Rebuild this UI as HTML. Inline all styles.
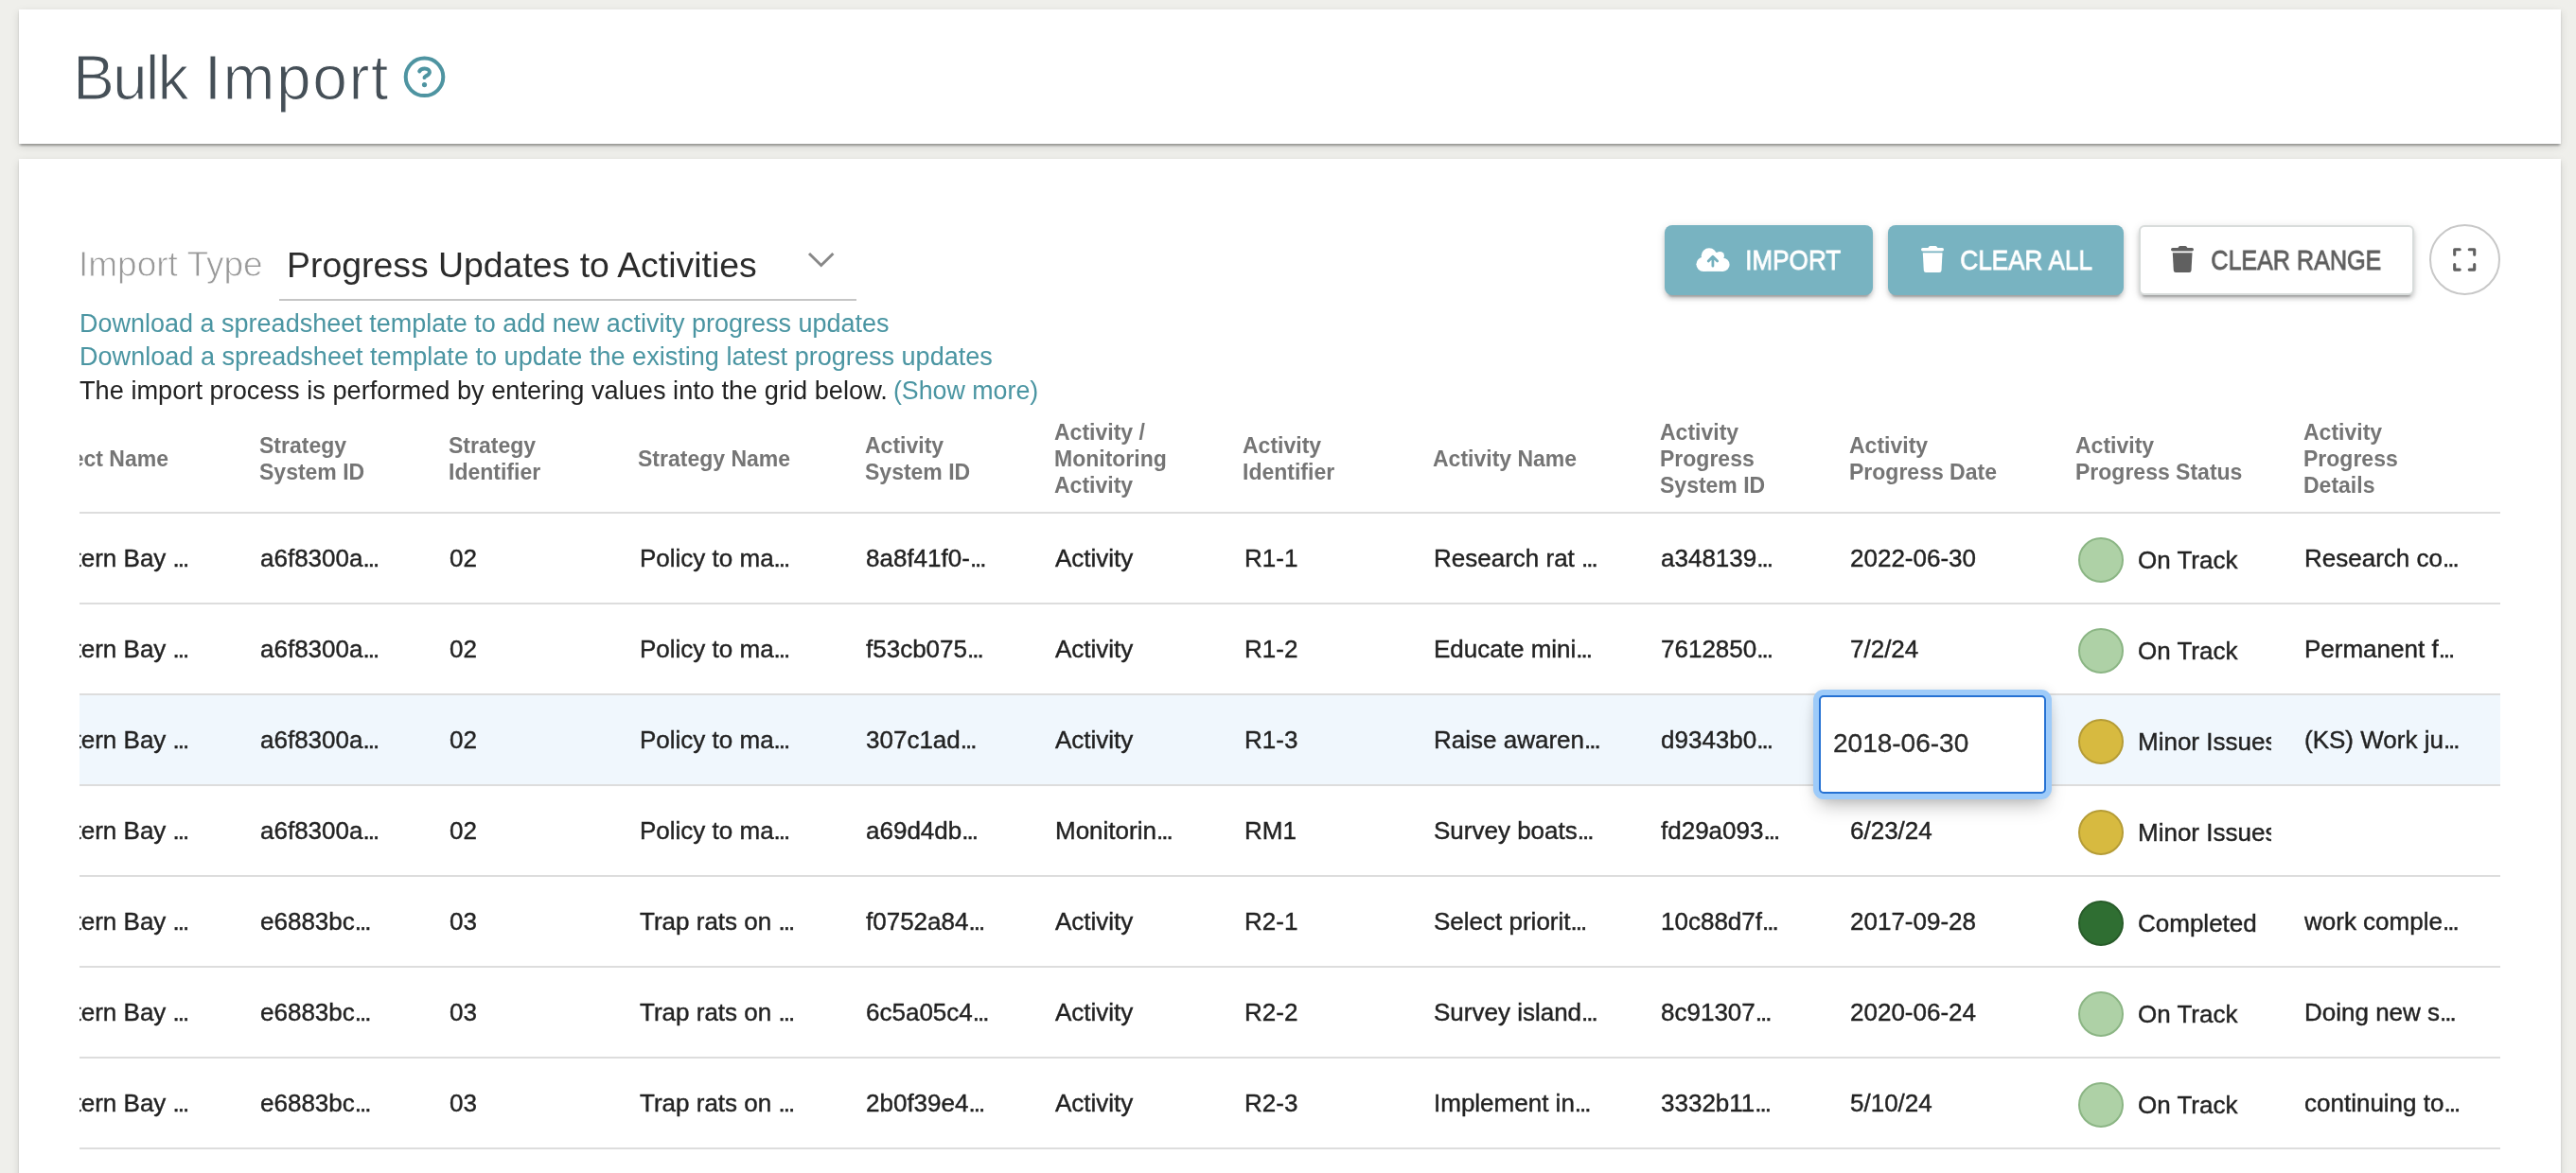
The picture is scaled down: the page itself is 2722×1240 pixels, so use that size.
<!DOCTYPE html><html><head><meta charset="utf-8"><style>
*{box-sizing:border-box}
html,body{margin:0;padding:0}
body{width:2722px;height:1240px;overflow:hidden;background:#efefeb;position:relative;font-family:"Liberation Sans", sans-serif}
.t{position:absolute;white-space:nowrap;will-change:transform}
.card{position:absolute;background:#fff;left:20px;width:2686px}
.btn{position:absolute;border-radius:8px}
</style></head><body><div class="card" style="top:10px;height:142px;box-shadow:0 4px 2px -2px rgba(0,0,0,.2),0 2px 2px 0 rgba(0,0,0,.14),0 3px 9px 0 rgba(0,0,0,.12)"></div>
<div class="card" style="top:168px;height:1100px;box-shadow:0 4px 2px -2px rgba(0,0,0,.2),0 2px 2px 0 rgba(0,0,0,.14),0 3px 9px 0 rgba(0,0,0,.12)"></div>
<div class="t" style="left:76.5px;top:49px;font-size:66px;line-height:66px;color:#454f57;font-weight:400;-webkit-text-stroke:1.2px #fff;paint-order:normal"><span style="letter-spacing:-2px">Bulk</span> <span style="letter-spacing:1.5px">Import</span></div>
<svg style="position:absolute;left:424px;top:57px" width="49" height="49" viewBox="-24.5 -24.3 49 49">
<circle cx="0" cy="0" r="19.8" fill="none" stroke="#4e94a1" stroke-width="4"/>
<path d="M-5.3 -5.9 C-4.4 -8 -2.4 -8.9 0.3 -8.9 C3.4 -8.9 5.4 -7.2 5.4 -5 C5.4 -2.6 3.2 -1.8 1.4 -0.8 C0.3 -0.2 -0.1 0.2 0 0.8" fill="none" stroke="#4e94a1" stroke-width="4" stroke-linecap="round" stroke-linejoin="round"/>
<circle cx="0" cy="8.3" r="2.6" fill="#4e94a1"/>
</svg>
<div class="t" style="left:83px;top:261px;font-size:37px;line-height:37px;color:#999;font-weight:400;-webkit-text-stroke:0.8px #fff">Import Type</div>
<div class="t" style="left:303px;top:262px;font-size:37.4px;line-height:37.4px;color:#2b2b2b;font-weight:400;">Progress Updates to Activities</div>
<div style="position:absolute;left:295px;top:316px;width:610px;height:2px;background:#c6c6c6"></div>
<svg style="position:absolute;left:850px;top:262px" width="36" height="24" viewBox="850 262 36 24"><path d="M855 268 L867.7 280.5 L880.4 268" fill="none" stroke="#888" stroke-width="3"/></svg>
<div class="t" style="left:84px;top:329px;font-size:27px;line-height:27px;color:#4a95a2;font-weight:400;">Download a spreadsheet template to add new activity progress updates</div>
<div class="t" style="left:84px;top:363px;font-size:27.08px;line-height:27.08px;color:#4a95a2;font-weight:400;">Download a spreadsheet template to update the existing latest progress updates</div>
<div class="t" style="left:84px;top:399px;font-size:27.2px;line-height:27.2px;color:#222;font-weight:400;">The import process is performed by entering values into the grid below. <span style="color:#4a95a2;font-size:26.8px;margin-left:-1.5px">(Show more)</span></div>
<div class="btn" style="left:1759px;top:238px;width:220px;height:74px;background:#78b3c1;box-shadow:0 6px 2px -4px rgba(0,0,0,.2),0 4px 4px 0 rgba(0,0,0,.14),0 2px 10px 0 rgba(0,0,0,.12)"></div>
<svg style="position:absolute;left:1785px;top:255px" width="50" height="40" viewBox="1785 255 50 40">
<g fill="#fff"><circle cx="1800" cy="279.3" r="7.6"/><circle cx="1806" cy="270.5" r="8.3"/><circle cx="1817.5" cy="270.4" r="4.5"/><circle cx="1820.5" cy="279.8" r="7.1"/><rect x="1800" y="271" width="20.5" height="15.9"/><rect x="1808" y="266.8" width="8.5" height="10"/></g>
<path d="M1805.2 276 L1809.9 271.2 L1814.7 276 M1809.9 271.5 L1809.9 281.2" fill="none" stroke="#74b0be" stroke-width="2.8" stroke-linecap="round" stroke-linejoin="round"/>
</svg>
<div class="t" style="left:1844px;top:260px;font-size:30px;line-height:30px;color:#fff;font-weight:400;-webkit-text-stroke:0.8px #fff;transform:scaleX(0.869);transform-origin:2px 0">IMPORT</div>
<div class="btn" style="left:1995px;top:238px;width:249px;height:74px;background:#78b3c1;box-shadow:0 6px 2px -4px rgba(0,0,0,.2),0 4px 4px 0 rgba(0,0,0,.14),0 2px 10px 0 rgba(0,0,0,.12)"></div>
<svg style="position:absolute;left:2027.5px;top:258.3px" width="29" height="33" viewBox="2027.5 258.3 29 33">
<g fill="#fff"><path d="M2036.7 262.5 L2037.9 260.7 Q2038.3 260.3 2039.0 260.3 L2044.8 260.3 Q2045.5 260.3 2045.9 260.7 L2047.1 262.5 Z"/>
<rect x="2029.5" y="262.3" width="24" height="3.5" rx="1.75"/>
<path d="M2031.3 267.5 L2052.0 267.5 L2051.0 286.3 Q2050.8 288.3 2048.8 288.3 L2034.5 288.3 Q2032.5 288.3 2032.3 286.3 Z"/></g></svg>
<div class="t" style="left:2070.5px;top:260px;font-size:30px;line-height:30px;color:#fff;font-weight:400;-webkit-text-stroke:0.8px #fff;transform:scaleX(0.872);transform-origin:2px 0">CLEAR ALL</div>
<div class="btn" style="left:2260px;top:238px;width:291px;height:74px;background:#fff;border:2px solid #d8dcdb;border-radius:6px;box-shadow:0 6px 2px -4px rgba(0,0,0,.2),0 4px 4px 0 rgba(0,0,0,.14),0 2px 10px 0 rgba(0,0,0,.12)"></div>
<svg style="position:absolute;left:2292.2px;top:258.3px" width="29" height="33" viewBox="2292.2 258.3 29 33">
<g fill="#606060"><path d="M2301.3999999999996 262.5 L2302.6 260.7 Q2303.0 260.3 2303.7 260.3 L2309.5 260.3 Q2310.2 260.3 2310.6 260.7 L2311.7999999999997 262.5 Z"/>
<rect x="2294.2" y="262.3" width="24" height="3.5" rx="1.75"/>
<path d="M2296.0 267.5 L2316.7 267.5 L2315.7 286.3 Q2315.5 288.3 2313.5 288.3 L2299.2 288.3 Q2297.2 288.3 2297.0 286.3 Z"/></g></svg>
<div class="t" style="left:2335.5px;top:260px;font-size:30px;line-height:30px;color:#5f5f5f;font-weight:400;-webkit-text-stroke:0.8px #5f5f5f;transform:scaleX(0.837);transform-origin:2px 0">CLEAR RANGE</div>
<div style="position:absolute;left:2567px;top:237px;width:75px;height:75px;border-radius:50%;border:2px solid #c8c8c8;background:#fff"></div>
<svg style="position:absolute;left:2584px;top:254px" width="40" height="40" viewBox="2584 254 40 40">
<path d="M2593.7 269.2 V263.7 H2599.2 M2609.2 263.7 H2614.7 V269.2 M2614.7 279.6 V285.1 H2609.2 M2599.2 285.1 H2593.7 V279.6" fill="none" stroke="#606060" stroke-width="3.1" stroke-linecap="round" stroke-linejoin="round"/>
</svg>
<div id="tbl" style="position:absolute;left:84px;top:420px;width:2558px;height:820px;overflow:hidden">
<div class="t" style="left:-56.0px;top:53.5px;font-size:23px;line-height:23px;color:#757575;font-weight:700;"><span style="display:inline-block;width:150px;text-align:right">Project Name</span></div>
<div class="t" style="left:189.7px;top:39.80000000000001px;font-size:23px;line-height:23px;color:#757575;font-weight:700;">Strategy</div>
<div class="t" style="left:189.7px;top:67.69999999999999px;font-size:23px;line-height:23px;color:#757575;font-weight:700;">System ID</div>
<div class="t" style="left:389.6px;top:39.80000000000001px;font-size:23px;line-height:23px;color:#757575;font-weight:700;">Strategy</div>
<div class="t" style="left:389.6px;top:67.69999999999999px;font-size:23px;line-height:23px;color:#757575;font-weight:700;">Identifier</div>
<div class="t" style="left:590.0px;top:53.5px;font-size:23px;line-height:23px;color:#757575;font-weight:700;">Strategy Name</div>
<div class="t" style="left:829.5px;top:39.80000000000001px;font-size:23px;line-height:23px;color:#757575;font-weight:700;">Activity</div>
<div class="t" style="left:829.5px;top:67.69999999999999px;font-size:23px;line-height:23px;color:#757575;font-weight:700;">System ID</div>
<div class="t" style="left:1029.5px;top:25.80000000000001px;font-size:23px;line-height:23px;color:#757575;font-weight:700;">Activity /</div>
<div class="t" style="left:1029.5px;top:53.80000000000001px;font-size:23px;line-height:23px;color:#757575;font-weight:700;">Monitoring</div>
<div class="t" style="left:1029.5px;top:81.70000000000005px;font-size:23px;line-height:23px;color:#757575;font-weight:700;">Activity</div>
<div class="t" style="left:1229.3px;top:39.80000000000001px;font-size:23px;line-height:23px;color:#757575;font-weight:700;">Activity</div>
<div class="t" style="left:1229.3px;top:67.69999999999999px;font-size:23px;line-height:23px;color:#757575;font-weight:700;">Identifier</div>
<div class="t" style="left:1429.5px;top:53.5px;font-size:23px;line-height:23px;color:#757575;font-weight:700;">Activity Name</div>
<div class="t" style="left:1669.6px;top:25.80000000000001px;font-size:23px;line-height:23px;color:#757575;font-weight:700;">Activity</div>
<div class="t" style="left:1669.6px;top:53.80000000000001px;font-size:23px;line-height:23px;color:#757575;font-weight:700;">Progress</div>
<div class="t" style="left:1669.6px;top:81.70000000000005px;font-size:23px;line-height:23px;color:#757575;font-weight:700;">System ID</div>
<div class="t" style="left:1869.7px;top:39.80000000000001px;font-size:23px;line-height:23px;color:#757575;font-weight:700;">Activity</div>
<div class="t" style="left:1869.7px;top:67.69999999999999px;font-size:23px;line-height:23px;color:#757575;font-weight:700;">Progress Date</div>
<div class="t" style="left:2109.3px;top:39.80000000000001px;font-size:23px;line-height:23px;color:#757575;font-weight:700;">Activity</div>
<div class="t" style="left:2109.3px;top:67.69999999999999px;font-size:23px;line-height:23px;color:#757575;font-weight:700;">Progress Status</div>
<div class="t" style="left:2349.7px;top:25.80000000000001px;font-size:23px;line-height:23px;color:#757575;font-weight:700;">Activity</div>
<div class="t" style="left:2349.7px;top:53.80000000000001px;font-size:23px;line-height:23px;color:#757575;font-weight:700;">Progress</div>
<div class="t" style="left:2349.7px;top:81.70000000000005px;font-size:23px;line-height:23px;color:#757575;font-weight:700;">Details</div>
<div style="position:absolute;left:0;top:121px;width:2558px;height:2px;background:#dddddd"></div>
<div style="position:absolute;left:0;top:217px;width:2558px;height:2px;background:#dddddd"></div>
<div class="t" style="left:-57px;top:157px;width:171px;text-align:right;font-size:26px;line-height:26px;color:#222;-webkit-text-stroke:0.4px #222">Western Bay <span style="letter-spacing:-2px;margin-right:2px">...</span></div>
<div class="t" style="left:191.2px;top:157px;font-size:26px;line-height:26px;color:#222;font-weight:400;-webkit-text-stroke:0.4px #222">a6f8300a<span style="letter-spacing:-2px">...</span></div>
<div class="t" style="left:391.1px;top:157px;font-size:26px;line-height:26px;color:#222;font-weight:400;-webkit-text-stroke:0.4px #222">02</div>
<div class="t" style="left:591.5px;top:157px;font-size:26px;line-height:26px;color:#222;font-weight:400;-webkit-text-stroke:0.4px #222">Policy to ma<span style="letter-spacing:-2px">...</span></div>
<div class="t" style="left:831.0px;top:157px;font-size:26px;line-height:26px;color:#222;font-weight:400;-webkit-text-stroke:0.4px #222">8a8f41f0-<span style="letter-spacing:-2px">...</span></div>
<div class="t" style="left:1031.0px;top:157px;font-size:26px;line-height:26px;color:#222;font-weight:400;-webkit-text-stroke:0.4px #222">Activity</div>
<div class="t" style="left:1230.8px;top:157px;font-size:26px;line-height:26px;color:#222;font-weight:400;-webkit-text-stroke:0.4px #222">R1-1</div>
<div class="t" style="left:1431.0px;top:157px;font-size:26px;line-height:26px;color:#222;font-weight:400;-webkit-text-stroke:0.4px #222">Research rat <span style="letter-spacing:-2px">...</span></div>
<div class="t" style="left:1671.1px;top:157px;font-size:26px;line-height:26px;color:#222;font-weight:400;-webkit-text-stroke:0.4px #222">a348139<span style="letter-spacing:-2px">...</span></div>
<div class="t" style="left:1871.2px;top:157px;font-size:26px;line-height:26px;color:#222;font-weight:400;-webkit-text-stroke:0.4px #222">2022-06-30</div>
<div style="position:absolute;left:2112px;top:148px;width:48px;height:48px;border-radius:50%;background:#aed1a6;border:2px solid #8bb584"></div>
<div style="position:absolute;left:2175px;top:123px;width:141px;height:94px;overflow:hidden">
<div class="t" style="left:0px;top:36px;font-size:26px;line-height:26px;color:#222;-webkit-text-stroke:0.4px #222">On Track</div></div>
<div class="t" style="left:2351.2px;top:157px;font-size:26px;line-height:26px;color:#222;font-weight:400;-webkit-text-stroke:0.4px #222">Research co<span style="letter-spacing:-2px">...</span></div>
<div style="position:absolute;left:0;top:313px;width:2558px;height:2px;background:#dddddd"></div>
<div class="t" style="left:-57px;top:253px;width:171px;text-align:right;font-size:26px;line-height:26px;color:#222;-webkit-text-stroke:0.4px #222">Western Bay <span style="letter-spacing:-2px;margin-right:2px">...</span></div>
<div class="t" style="left:191.2px;top:253px;font-size:26px;line-height:26px;color:#222;font-weight:400;-webkit-text-stroke:0.4px #222">a6f8300a<span style="letter-spacing:-2px">...</span></div>
<div class="t" style="left:391.1px;top:253px;font-size:26px;line-height:26px;color:#222;font-weight:400;-webkit-text-stroke:0.4px #222">02</div>
<div class="t" style="left:591.5px;top:253px;font-size:26px;line-height:26px;color:#222;font-weight:400;-webkit-text-stroke:0.4px #222">Policy to ma<span style="letter-spacing:-2px">...</span></div>
<div class="t" style="left:831.0px;top:253px;font-size:26px;line-height:26px;color:#222;font-weight:400;-webkit-text-stroke:0.4px #222">f53cb075<span style="letter-spacing:-2px">...</span></div>
<div class="t" style="left:1031.0px;top:253px;font-size:26px;line-height:26px;color:#222;font-weight:400;-webkit-text-stroke:0.4px #222">Activity</div>
<div class="t" style="left:1230.8px;top:253px;font-size:26px;line-height:26px;color:#222;font-weight:400;-webkit-text-stroke:0.4px #222">R1-2</div>
<div class="t" style="left:1431.0px;top:253px;font-size:26px;line-height:26px;color:#222;font-weight:400;-webkit-text-stroke:0.4px #222">Educate mini<span style="letter-spacing:-2px">...</span></div>
<div class="t" style="left:1671.1px;top:253px;font-size:26px;line-height:26px;color:#222;font-weight:400;-webkit-text-stroke:0.4px #222">7612850<span style="letter-spacing:-2px">...</span></div>
<div class="t" style="left:1871.2px;top:253px;font-size:26px;line-height:26px;color:#222;font-weight:400;-webkit-text-stroke:0.4px #222">7/2/24</div>
<div style="position:absolute;left:2112px;top:244px;width:48px;height:48px;border-radius:50%;background:#aed1a6;border:2px solid #8bb584"></div>
<div style="position:absolute;left:2175px;top:219px;width:141px;height:94px;overflow:hidden">
<div class="t" style="left:0px;top:36px;font-size:26px;line-height:26px;color:#222;-webkit-text-stroke:0.4px #222">On Track</div></div>
<div class="t" style="left:2351.2px;top:253px;font-size:26px;line-height:26px;color:#222;font-weight:400;-webkit-text-stroke:0.4px #222">Permanent f<span style="letter-spacing:-2px">...</span></div>
<div style="position:absolute;left:0;top:315px;width:2558px;height:94px;background:#f0f7fd"></div>
<div style="position:absolute;left:0;top:409px;width:2558px;height:2px;background:#dddddd"></div>
<div class="t" style="left:-57px;top:349px;width:171px;text-align:right;font-size:26px;line-height:26px;color:#222;-webkit-text-stroke:0.4px #222">Western Bay <span style="letter-spacing:-2px;margin-right:2px">...</span></div>
<div class="t" style="left:191.2px;top:349px;font-size:26px;line-height:26px;color:#222;font-weight:400;-webkit-text-stroke:0.4px #222">a6f8300a<span style="letter-spacing:-2px">...</span></div>
<div class="t" style="left:391.1px;top:349px;font-size:26px;line-height:26px;color:#222;font-weight:400;-webkit-text-stroke:0.4px #222">02</div>
<div class="t" style="left:591.5px;top:349px;font-size:26px;line-height:26px;color:#222;font-weight:400;-webkit-text-stroke:0.4px #222">Policy to ma<span style="letter-spacing:-2px">...</span></div>
<div class="t" style="left:831.0px;top:349px;font-size:26px;line-height:26px;color:#222;font-weight:400;-webkit-text-stroke:0.4px #222">307c1ad<span style="letter-spacing:-2px">...</span></div>
<div class="t" style="left:1031.0px;top:349px;font-size:26px;line-height:26px;color:#222;font-weight:400;-webkit-text-stroke:0.4px #222">Activity</div>
<div class="t" style="left:1230.8px;top:349px;font-size:26px;line-height:26px;color:#222;font-weight:400;-webkit-text-stroke:0.4px #222">R1-3</div>
<div class="t" style="left:1431.0px;top:349px;font-size:26px;line-height:26px;color:#222;font-weight:400;-webkit-text-stroke:0.4px #222">Raise awaren<span style="letter-spacing:-2px">...</span></div>
<div class="t" style="left:1671.1px;top:349px;font-size:26px;line-height:26px;color:#222;font-weight:400;-webkit-text-stroke:0.4px #222">d9343b0<span style="letter-spacing:-2px">...</span></div>
<div style="position:absolute;left:2112px;top:340px;width:48px;height:48px;border-radius:50%;background:#d7ba40;border:2px solid #b59c36"></div>
<div style="position:absolute;left:2175px;top:315px;width:141px;height:94px;overflow:hidden">
<div class="t" style="left:0px;top:36px;font-size:26px;line-height:26px;color:#222;-webkit-text-stroke:0.4px #222">Minor Issues</div></div>
<div class="t" style="left:2351.2px;top:349px;font-size:26px;line-height:26px;color:#222;font-weight:400;-webkit-text-stroke:0.4px #222">(KS) Work ju<span style="letter-spacing:-2px">...</span></div>
<div style="position:absolute;left:0;top:505px;width:2558px;height:2px;background:#dddddd"></div>
<div class="t" style="left:-57px;top:445px;width:171px;text-align:right;font-size:26px;line-height:26px;color:#222;-webkit-text-stroke:0.4px #222">Western Bay <span style="letter-spacing:-2px;margin-right:2px">...</span></div>
<div class="t" style="left:191.2px;top:445px;font-size:26px;line-height:26px;color:#222;font-weight:400;-webkit-text-stroke:0.4px #222">a6f8300a<span style="letter-spacing:-2px">...</span></div>
<div class="t" style="left:391.1px;top:445px;font-size:26px;line-height:26px;color:#222;font-weight:400;-webkit-text-stroke:0.4px #222">02</div>
<div class="t" style="left:591.5px;top:445px;font-size:26px;line-height:26px;color:#222;font-weight:400;-webkit-text-stroke:0.4px #222">Policy to ma<span style="letter-spacing:-2px">...</span></div>
<div class="t" style="left:831.0px;top:445px;font-size:26px;line-height:26px;color:#222;font-weight:400;-webkit-text-stroke:0.4px #222">a69d4db<span style="letter-spacing:-2px">...</span></div>
<div class="t" style="left:1031.0px;top:445px;font-size:26px;line-height:26px;color:#222;font-weight:400;-webkit-text-stroke:0.4px #222">Monitorin<span style="letter-spacing:-2px">...</span></div>
<div class="t" style="left:1230.8px;top:445px;font-size:26px;line-height:26px;color:#222;font-weight:400;-webkit-text-stroke:0.4px #222">RM1</div>
<div class="t" style="left:1431.0px;top:445px;font-size:26px;line-height:26px;color:#222;font-weight:400;-webkit-text-stroke:0.4px #222">Survey boats<span style="letter-spacing:-2px">...</span></div>
<div class="t" style="left:1671.1px;top:445px;font-size:26px;line-height:26px;color:#222;font-weight:400;-webkit-text-stroke:0.4px #222">fd29a093<span style="letter-spacing:-2px">...</span></div>
<div class="t" style="left:1871.2px;top:445px;font-size:26px;line-height:26px;color:#222;font-weight:400;-webkit-text-stroke:0.4px #222">6/23/24</div>
<div style="position:absolute;left:2112px;top:436px;width:48px;height:48px;border-radius:50%;background:#d7ba40;border:2px solid #b59c36"></div>
<div style="position:absolute;left:2175px;top:411px;width:141px;height:94px;overflow:hidden">
<div class="t" style="left:0px;top:36px;font-size:26px;line-height:26px;color:#222;-webkit-text-stroke:0.4px #222">Minor Issues</div></div>
<div style="position:absolute;left:0;top:601px;width:2558px;height:2px;background:#dddddd"></div>
<div class="t" style="left:-57px;top:541px;width:171px;text-align:right;font-size:26px;line-height:26px;color:#222;-webkit-text-stroke:0.4px #222">Western Bay <span style="letter-spacing:-2px;margin-right:2px">...</span></div>
<div class="t" style="left:191.2px;top:541px;font-size:26px;line-height:26px;color:#222;font-weight:400;-webkit-text-stroke:0.4px #222">e6883bc<span style="letter-spacing:-2px">...</span></div>
<div class="t" style="left:391.1px;top:541px;font-size:26px;line-height:26px;color:#222;font-weight:400;-webkit-text-stroke:0.4px #222">03</div>
<div class="t" style="left:591.5px;top:541px;font-size:26px;line-height:26px;color:#222;font-weight:400;-webkit-text-stroke:0.4px #222">Trap rats on <span style="letter-spacing:-2px">...</span></div>
<div class="t" style="left:831.0px;top:541px;font-size:26px;line-height:26px;color:#222;font-weight:400;-webkit-text-stroke:0.4px #222">f0752a84<span style="letter-spacing:-2px">...</span></div>
<div class="t" style="left:1031.0px;top:541px;font-size:26px;line-height:26px;color:#222;font-weight:400;-webkit-text-stroke:0.4px #222">Activity</div>
<div class="t" style="left:1230.8px;top:541px;font-size:26px;line-height:26px;color:#222;font-weight:400;-webkit-text-stroke:0.4px #222">R2-1</div>
<div class="t" style="left:1431.0px;top:541px;font-size:26px;line-height:26px;color:#222;font-weight:400;-webkit-text-stroke:0.4px #222">Select priorit<span style="letter-spacing:-2px">...</span></div>
<div class="t" style="left:1671.1px;top:541px;font-size:26px;line-height:26px;color:#222;font-weight:400;-webkit-text-stroke:0.4px #222">10c88d7f<span style="letter-spacing:-2px">...</span></div>
<div class="t" style="left:1871.2px;top:541px;font-size:26px;line-height:26px;color:#222;font-weight:400;-webkit-text-stroke:0.4px #222">2017-09-28</div>
<div style="position:absolute;left:2112px;top:532px;width:48px;height:48px;border-radius:50%;background:#2f6e32;border:2px solid #285c2a"></div>
<div style="position:absolute;left:2175px;top:507px;width:141px;height:94px;overflow:hidden">
<div class="t" style="left:0px;top:36px;font-size:26px;line-height:26px;color:#222;-webkit-text-stroke:0.4px #222">Completed</div></div>
<div class="t" style="left:2351.2px;top:541px;font-size:26px;line-height:26px;color:#222;font-weight:400;-webkit-text-stroke:0.4px #222">work comple<span style="letter-spacing:-2px">...</span></div>
<div style="position:absolute;left:0;top:697px;width:2558px;height:2px;background:#dddddd"></div>
<div class="t" style="left:-57px;top:637px;width:171px;text-align:right;font-size:26px;line-height:26px;color:#222;-webkit-text-stroke:0.4px #222">Western Bay <span style="letter-spacing:-2px;margin-right:2px">...</span></div>
<div class="t" style="left:191.2px;top:637px;font-size:26px;line-height:26px;color:#222;font-weight:400;-webkit-text-stroke:0.4px #222">e6883bc<span style="letter-spacing:-2px">...</span></div>
<div class="t" style="left:391.1px;top:637px;font-size:26px;line-height:26px;color:#222;font-weight:400;-webkit-text-stroke:0.4px #222">03</div>
<div class="t" style="left:591.5px;top:637px;font-size:26px;line-height:26px;color:#222;font-weight:400;-webkit-text-stroke:0.4px #222">Trap rats on <span style="letter-spacing:-2px">...</span></div>
<div class="t" style="left:831.0px;top:637px;font-size:26px;line-height:26px;color:#222;font-weight:400;-webkit-text-stroke:0.4px #222">6c5a05c4<span style="letter-spacing:-2px">...</span></div>
<div class="t" style="left:1031.0px;top:637px;font-size:26px;line-height:26px;color:#222;font-weight:400;-webkit-text-stroke:0.4px #222">Activity</div>
<div class="t" style="left:1230.8px;top:637px;font-size:26px;line-height:26px;color:#222;font-weight:400;-webkit-text-stroke:0.4px #222">R2-2</div>
<div class="t" style="left:1431.0px;top:637px;font-size:26px;line-height:26px;color:#222;font-weight:400;-webkit-text-stroke:0.4px #222">Survey island<span style="letter-spacing:-2px">...</span></div>
<div class="t" style="left:1671.1px;top:637px;font-size:26px;line-height:26px;color:#222;font-weight:400;-webkit-text-stroke:0.4px #222">8c91307<span style="letter-spacing:-2px">...</span></div>
<div class="t" style="left:1871.2px;top:637px;font-size:26px;line-height:26px;color:#222;font-weight:400;-webkit-text-stroke:0.4px #222">2020-06-24</div>
<div style="position:absolute;left:2112px;top:628px;width:48px;height:48px;border-radius:50%;background:#aed1a6;border:2px solid #8bb584"></div>
<div style="position:absolute;left:2175px;top:603px;width:141px;height:94px;overflow:hidden">
<div class="t" style="left:0px;top:36px;font-size:26px;line-height:26px;color:#222;-webkit-text-stroke:0.4px #222">On Track</div></div>
<div class="t" style="left:2351.2px;top:637px;font-size:26px;line-height:26px;color:#222;font-weight:400;-webkit-text-stroke:0.4px #222">Doing new s<span style="letter-spacing:-2px">...</span></div>
<div style="position:absolute;left:0;top:793px;width:2558px;height:2px;background:#dddddd"></div>
<div class="t" style="left:-57px;top:733px;width:171px;text-align:right;font-size:26px;line-height:26px;color:#222;-webkit-text-stroke:0.4px #222">Western Bay <span style="letter-spacing:-2px;margin-right:2px">...</span></div>
<div class="t" style="left:191.2px;top:733px;font-size:26px;line-height:26px;color:#222;font-weight:400;-webkit-text-stroke:0.4px #222">e6883bc<span style="letter-spacing:-2px">...</span></div>
<div class="t" style="left:391.1px;top:733px;font-size:26px;line-height:26px;color:#222;font-weight:400;-webkit-text-stroke:0.4px #222">03</div>
<div class="t" style="left:591.5px;top:733px;font-size:26px;line-height:26px;color:#222;font-weight:400;-webkit-text-stroke:0.4px #222">Trap rats on <span style="letter-spacing:-2px">...</span></div>
<div class="t" style="left:831.0px;top:733px;font-size:26px;line-height:26px;color:#222;font-weight:400;-webkit-text-stroke:0.4px #222">2b0f39e4<span style="letter-spacing:-2px">...</span></div>
<div class="t" style="left:1031.0px;top:733px;font-size:26px;line-height:26px;color:#222;font-weight:400;-webkit-text-stroke:0.4px #222">Activity</div>
<div class="t" style="left:1230.8px;top:733px;font-size:26px;line-height:26px;color:#222;font-weight:400;-webkit-text-stroke:0.4px #222">R2-3</div>
<div class="t" style="left:1431.0px;top:733px;font-size:26px;line-height:26px;color:#222;font-weight:400;-webkit-text-stroke:0.4px #222">Implement in<span style="letter-spacing:-2px">...</span></div>
<div class="t" style="left:1671.1px;top:733px;font-size:26px;line-height:26px;color:#222;font-weight:400;-webkit-text-stroke:0.4px #222">3332b11<span style="letter-spacing:-2px">...</span></div>
<div class="t" style="left:1871.2px;top:733px;font-size:26px;line-height:26px;color:#222;font-weight:400;-webkit-text-stroke:0.4px #222">5/10/24</div>
<div style="position:absolute;left:2112px;top:724px;width:48px;height:48px;border-radius:50%;background:#aed1a6;border:2px solid #8bb584"></div>
<div style="position:absolute;left:2175px;top:699px;width:141px;height:94px;overflow:hidden">
<div class="t" style="left:0px;top:36px;font-size:26px;line-height:26px;color:#222;-webkit-text-stroke:0.4px #222">On Track</div></div>
<div class="t" style="left:2351.2px;top:733px;font-size:26px;line-height:26px;color:#222;font-weight:400;-webkit-text-stroke:0.4px #222">continuing to<span style="letter-spacing:-2px">...</span></div>
</div>
<div style="position:absolute;left:1922px;top:735px;width:240px;height:104px;border:2px solid #2571d3;border-radius:5px;background:#fff;box-shadow:0 0 0 6px #9ecbf9,0 12px 20px 0 rgba(0,0,0,.26),0 0 12px 6px rgba(0,0,0,.1)"></div>
<div class="t" style="left:1937px;top:772px;font-size:28px;line-height:28px;color:#2a2a2a;font-weight:400;-webkit-text-stroke:0.3px #2a2a2a">2018-06-30</div></body></html>
